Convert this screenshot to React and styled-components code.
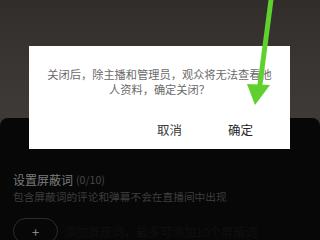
import styled, { createGlobalStyle } from 'styled-components'

const GlobalStyle = createGlobalStyle`
  html, body {
    margin: 0;
    padding: 0;
    background: #080808;
  }
  body {
    font-family: "Noto Sans CJK SC", "Noto Sans", sans-serif;
  }
`

// small Chinese text is set at 12px and scaled down (browsers may clamp below 12px)
const Screen = styled.div`
  position: relative;
  display: flex;
  flex-direction: column;
  width: 320px;
  height: 240px;
  overflow: hidden;
  background: #3a3634;
`

const Backdrop = styled.div`
  height: 118px;
  flex-shrink: 0;
  background: linear-gradient(180deg, #302d2b 0%, #3a3634 60%, #3d3a37 100%);
`

const Sheet = styled.div`
  flex: 1;
  padding: 54px 13px 0;
  border-radius: 8px 8px 0 0;
  background: #070707;
`

const Title = styled.div`
  display: flex;
  align-items: baseline;
  gap: 3px;
  font-size: 12px;
  line-height: 16px;
  color: #7c7c7c;
`

const Count = styled.span`
  display: inline-block;
  font-size: 12px;
  color: #474747;
  transform: scale(0.88);
  transform-origin: left center;
`

const Hint = styled.div`
  margin-top: 2px;
  font-size: 12px;
  line-height: 14px;
  white-space: nowrap;
  color: #3e3e3e;
  transform: scale(0.89);
  transform-origin: left top;
`

const AddRow = styled.div`
  display: flex;
  align-items: center;
  gap: 6px;
  margin-top: 14px;
`

const AddButton = styled.div`
  display: flex;
  align-items: center;
  justify-content: center;
  width: 45px;
  height: 26px;
  box-sizing: border-box;
  border: 1px solid #2c2c2c;
  border-radius: 13px;
  font-size: 13px;
  color: #8a8a8a;
`

const Faint = styled.span`
  font-size: 12px;
  white-space: nowrap;
  color: #101010;
`

const Dialog = styled.div`
  position: absolute;
  left: 29px;
  top: 46px;
  width: 261px;
  height: 103px;
  box-sizing: border-box;
  padding-top: 21px;
  background: #ffffff;
  display: flex;
  flex-direction: column;
`

const Message = styled.p`
  margin: 0;
  text-align: center;
  white-space: nowrap;
  font-size: 12px;
  line-height: 16px;
  color: #6a6a6a;
  transform: scale(0.935);
  transform-origin: center top;
`

const Actions = styled.div`
  display: flex;
  justify-content: flex-end;
  align-items: center;
  gap: 8px;
  height: 38px;
  margin-top: 12px;
  padding-right: 18px;
`

const Action = styled.button`
  border: none;
  background: none;
  padding: 0 19px;
  font-family: inherit;
  font-size: 12.5px;
  line-height: 16px;
  color: ${p => (p.$primary ? '#262626' : '#3a3a3a')};
`

const Arrow = styled.svg`
  position: absolute;
  left: 0;
  top: 0;
  pointer-events: none;
`

export default function App() {
  return (
    <>
      <GlobalStyle />
      <Screen>
        <Backdrop />
        <Sheet>
          <Title>
            设置屏蔽词<Count>(0/10)</Count>
          </Title>
          <Hint>包含屏蔽词的评论和弹幕不会在直播间中出现</Hint>
          <AddRow>
            <AddButton>+</AddButton>
            <Faint>添加屏蔽词，最多可添加10个屏蔽词</Faint>
          </AddRow>
        </Sheet>
        <Dialog>
          <Message>
            关闭后，除主播和管理员，观众将无法查看他
            <br />
            人资料，确定关闭？
          </Message>
          <Actions>
            <Action>取消</Action>
            <Action $primary>确定</Action>
          </Actions>
        </Dialog>
        <Arrow width="320" height="240" viewBox="0 0 320 240">
          <path d="M269 -4 L274 -4 L262 88 L257 88 Z" fill="#5fd02e" />
          <polygon points="247,84 270,85 255,105" fill="#5fd02e" />
        </Arrow>
      </Screen>
    </>
  )
}
